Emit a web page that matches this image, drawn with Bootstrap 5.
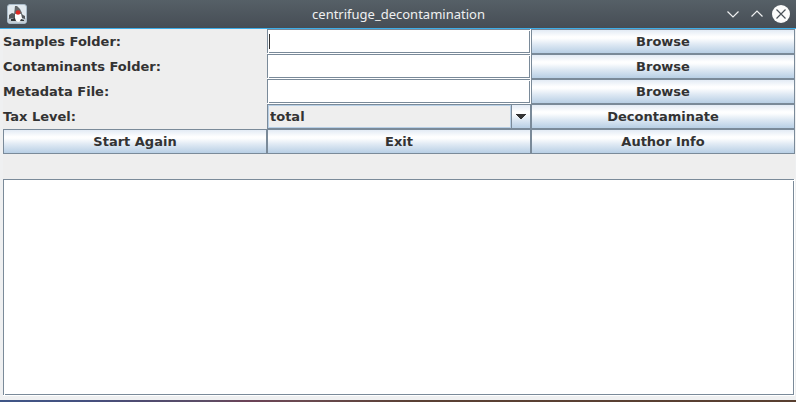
<!DOCTYPE html>
<html lang="en">
<head>
<meta charset="utf-8">
<meta name="viewport" content="width=device-width, initial-scale=1">
<title>centrifuge_decontamination</title>
<link href="https://cdn.jsdelivr.net/npm/bootstrap@5.3.0/dist/css/bootstrap.min.css" rel="stylesheet">
<style>
  :root {
    --edge: #7a8a99;
    --face: #eeeeee;
    --ink: #333333;
    --ocean: linear-gradient(#e3ebf5, #ffffff 30%, #fcfdfe 38%, #dde8f3 64%, #b8cfe5);
  }
  body {
    background: #eff0f1;
    color: var(--ink);
    font: bold 13px/15px "DejaVu Sans", Verdana, sans-serif;
  }
  .titlebar {
    height: 29px;
    background: linear-gradient(#566067, #464d55);
    border-bottom: 1px solid #3daee9;
    color: #eff0f1;
    padding: 0 6px 0 7px;
  }
  .titlebar h1 { font: 13px/18px "Noto Sans", sans-serif; }
  .titlebar svg { display: block; }
  .win-btn { background: none; border: 0; padding: 0; color: inherit; }
  .win-side { width: 72px; }
  .content-pane { background: var(--face); margin: 0 1px 4px 3px; }
  .form-grid { display: grid; grid-template-columns: repeat(3, 1fr); grid-auto-rows: 25px; }
  .form-grid label { display: flex; align-items: center; }
  .metal-btn {
    border: 1px solid var(--edge);
    border-radius: 0;
    padding: 0;
    color: var(--ink);
    font: inherit;
    background: var(--ocean);
  }
  .metal-btn:hover, .metal-btn:active { color: var(--ink); border-color: var(--edge) !important; }
  .metal-field {
    --caret: transparent;
    width: 100%;
    min-width: 0;
    border: 0;
    border-radius: 0;
    outline: 0;
    padding: 2px;
    color: var(--ink);
    font: inherit;
    font-weight: normal;
    background:
      linear-gradient(var(--caret), var(--caret)) 2px 5px / 1px 15px no-repeat,
      linear-gradient(var(--edge), var(--edge)) 0 0 / calc(100% - 1px) 1px no-repeat,
      linear-gradient(var(--edge), var(--edge)) 0 0 / 1px calc(100% - 1px) no-repeat,
      linear-gradient(var(--edge), var(--edge)) right 1px bottom 1px / calc(100% - 3px) 1px no-repeat,
      linear-gradient(var(--edge), var(--edge)) right 1px bottom 1px / 1px calc(100% - 3px) no-repeat,
      #ffffff;
  }
  .metal-field.first-field:placeholder-shown { --caret: var(--ink); caret-color: transparent; }
  .metal-combo { border: 1px solid var(--edge); background: var(--ocean); }
  .metal-combo select {
    appearance: none;
    width: 100%;
    height: 100%;
    border: 0;
    outline: 0;
    padding: 0 20px 0 2px;
    color: var(--ink);
    font: inherit;
    background: none;
  }
  .combo-value {
    position: absolute;
    inset: 0 19px 0 0;
    border: 1px solid #b8cfe5;
    background: var(--face);
    box-shadow: 1px 0 var(--edge);
  }
  .combo-arrow { position: absolute; right: 4px; top: 9px; pointer-events: none; }
  .output { height: calc(100vh - 185px); min-height: 60px; margin-top: 25px; resize: none; }
  .desktop-strip {
    height: 2px;
    background: linear-gradient(90deg, #3f5687, #45507f 11%, #4f4b70 18%, #5c4d66 26%, #6b4257 31%, #6a4a50 38%, #5a4034 52%, #583f30);
  }
</style>
<script src="https://cdn.jsdelivr.net/npm/bootstrap@5.3.0/dist/js/bootstrap.bundle.min.js"></script>
</head>
<body class="d-flex flex-column min-vh-100 overflow-hidden">
  <header class="titlebar d-flex align-items-center justify-content-between">
    <div class="win-side">
      <svg width="20" height="20" viewBox="0 0 20 20" aria-hidden="true">
        <rect x="0.500" y="0.500" width="19" height="19" rx="2.500" fill="#e1e9ef" stroke="#a9bac8"/>
        <path d="M1 14h18v3q0 2-2 2H3q-2 0-2-2z" fill="#c3cdd5"/>
        <path d="M8 2 10 2 13 5 15 9 14 11H7z" fill="#63676a"/>
        <path d="M8 10q3-1 6 0l1 4-1 3-3 1-3-2z" fill="#ffffff"/>
        <path d="M2 11 5 9 8 10 8 15 6 14 2 15z" fill="#54585b"/>
        <path d="M14 9 16 11 18 12v3l-3-1z" fill="#54585b"/>
        <path d="M4 15l4-1 1 3H4zM14 15l3 1v1h-4z" fill="#303437"/>
        <circle cx="11" cy="8.500" r="2.300" fill="#dd2a24"/>
      </svg>
    </div>
    <h1 class="m-0">centrifuge_decontamination</h1>
    <div class="win-side d-flex justify-content-end align-items-center gap-1">
      <button class="win-btn" type="button" aria-label="Minimize"><svg width="20" height="20" viewBox="0 0 20 20" fill="none" stroke="#eff0f1" stroke-width="1.2"><path d="M3.500 7.500 9 13 14.500 7.500"/></svg></button>
      <button class="win-btn" type="button" aria-label="Maximize"><svg width="20" height="20" viewBox="0 0 20 20" fill="none" stroke="#eff0f1" stroke-width="1.2"><path d="M3.500 12.500 9 7 14.500 12.500"/></svg></button>
      <button class="win-btn" type="button" aria-label="Close"><svg width="18" height="20" viewBox="0 0 18 20"><circle cx="9" cy="10" r="9" fill="#fcfcfc"/><path d="M4.500 5.500 13.500 14.500M13.500 5.500 4.500 14.500" stroke="#4a5158" stroke-width="1.2"/></svg></button>
    </div>
  </header>

  <main class="content-pane flex-grow-1">
    <form class="form-grid">
      <label for="samples">Samples Folder:</label>
      <input class="metal-field first-field" id="samples" type="text" placeholder=" ">
      <button class="btn metal-btn" type="button">Browse</button>

      <label for="contaminants">Contaminants Folder:</label>
      <input class="metal-field" id="contaminants" type="text">
      <button class="btn metal-btn" type="button">Browse</button>

      <label for="metadata">Metadata File:</label>
      <input class="metal-field" id="metadata" type="text">
      <button class="btn metal-btn" type="button">Browse</button>

      <label for="tax">Tax Level:</label>
      <div class="metal-combo position-relative">
        <span class="combo-value"></span>
        <select class="position-relative" id="tax"><option>total</option></select>
        <svg class="combo-arrow" width="10" height="5" viewBox="0 0 10 5" shape-rendering="crispEdges" aria-hidden="true"><path d="M0 0h10v1H9v1H8v1H7v1H6v1H4V4H3V3H2V2H1V1H0z" fill="#333"/></svg>
      </div>
      <button class="btn metal-btn" type="button">Decontaminate</button>

      <button class="btn metal-btn" type="reset">Start Again</button>
      <button class="btn metal-btn" type="button">Exit</button>
      <button class="btn metal-btn" type="button">Author Info</button>
    </form>
    <textarea class="metal-field output d-block" aria-label="Output"></textarea>
  </main>
  <div class="desktop-strip"></div>
</body>
</html>
